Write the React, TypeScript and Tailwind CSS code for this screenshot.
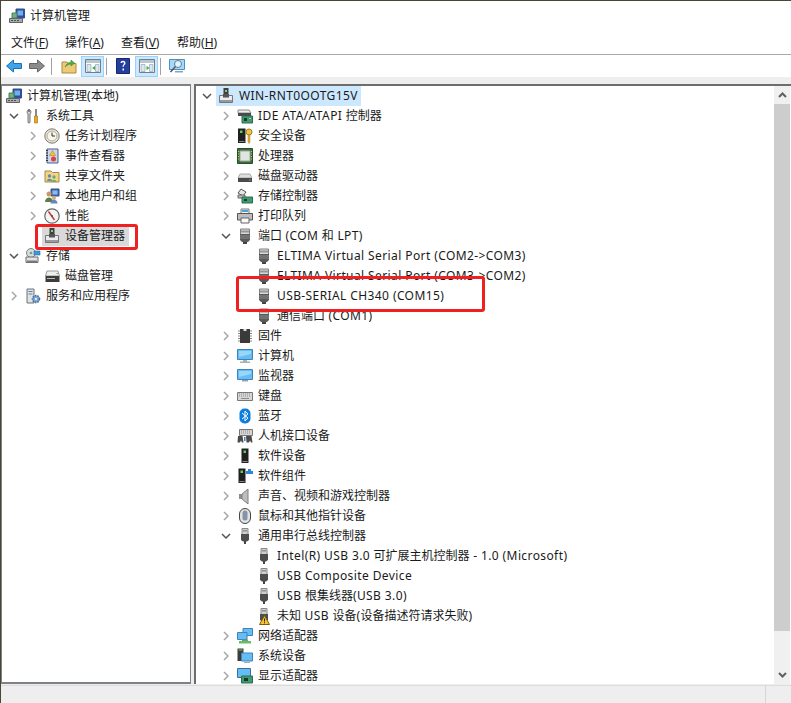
import React from 'react';

type SvgProps = { children: React.ReactNode; w?: number; h?: number };

const Svg: React.FC<SvgProps> = ({ children, w = 16, h = 16 }) => (
    <svg width={w} height={h} viewBox={`0 0 ${w} ${h}`} className="shrink-0 block">{children}</svg>
);

// tree icons, all drawn on a 16px box
const Port = () => (
    <Svg>
        <path d="M3.500 1h9v7h-9z" fill="#d8d8d8" stroke="#808080" />
        <path d="M5 2.500v2M7 2.500v2M9 2.500v2M11 2.500v2" stroke="#555" />
        <path d="M3 6h10v6l-2 2H5l-2-2z" fill="#5a5a5a" />
        <path d="M3 8h10M3 10h10" stroke="#8a8a8a" />
        <path d="M6 14h4v2H6z" fill="#444" />
    </Svg>
);

const Usb = () => (
    <Svg>
        <path d="M5 0.500h6v6H5z" fill="#cfcfcf" stroke="#8a8a8a" />
        <path d="M6.500 2h1v1.500h-1zM8.500 2h1v1.500h-1z" fill="#555" />
        <path d="M4 6h8v6l-2 1.500H6L4 12z" fill="#4d4d4d" />
        <path d="M7 13h2v3H7z" fill="#444" />
    </Svg>
);

const DeviceMgr = () => (
    <Svg>
        <path d="M5.500 0h5v6h-5z" fill="#3f3f3f" />
        <path d="M7 2h2v2H7z" fill="#7ed07a" />
        <path d="M1.500 7.500h13v7h-13z" fill="#ececec" stroke="#777" />
        <path d="M5 6h6v3.500H5z" fill="#555" />
        <path d="M2 12h12v2H2z" fill="#9a9a9a" />
    </Svg>
);

const MgmtComputer = () => (
    <Svg>
        <path d="M7 1h8.500v9H7z" fill="#2a4fa8" stroke="#3c4f7a" />
        <path d="M8.500 2.500h5.500v5H8.500z" fill="#6fb0ee" />
        <path d="M3 5h5v5H3z" fill="#6db47a" stroke="#4f7f5a" />
        <path d="M0.500 10.500h13v4h-13z" fill="#a8acb0" stroke="#5e6468" />
        <path d="M2 12h2v1H2zM5 12h2v1H5zM8 12h2v1H8z" fill="#4c5256" />
    </Svg>
);

const Tools = () => (
    <Svg>
        <path d="M4 1.500c-2 .5-2.500 3-1 4.500v8c0 1.500 2 1.500 2 0V6c1.500-1.500 1-4-1-4.500V4H4z" fill="#d8d8d8" stroke="#555" strokeWidth=".8" />
        <path d="M10 1h2v7h-2z" fill="#8a8a8a" />
        <path d="M9.500 8h3v7h-3z" fill="#e6a91e" stroke="#a06f10" strokeWidth=".6" />
    </Svg>
);

const Clock = () => (
    <Svg>
        <circle cx="8" cy="8" r="7.200" fill="#ece7d6" stroke="#7a7a72" />
        <circle cx="8" cy="8" r="5" fill="#f8f6ec" stroke="#b5ae94" />
        <path d="M8 4.500V8h3" stroke="#333" fill="none" />
    </Svg>
);

const EventLog = () => (
    <Svg>
        <path d="M3 1h11v14H3z" fill="#c9d6ec" stroke="#4a5f8c" />
        <path d="M2 2.500h2M2 5h2M2 7.500h2M2 10h2M2 12.500h2" stroke="#333" />
        <path d="M8.500 2.500l3 5h-6z" fill="#f2c23a" stroke="#a67b10" strokeWidth=".5" />
        <circle cx="9.500" cy="11" r="2.500" fill="#d8443c" />
    </Svg>
);

const SharedFolder = () => (
    <Svg>
        <path d="M1 3h6l1.500 1.500H15V14H1z" fill="#efd48a" stroke="#a78a3e" />
        <circle cx="5.500" cy="8" r="1.700" fill="#6a87b0" />
        <path d="M3 13c0-3 5-3 5 0z" fill="#6a87b0" />
        <circle cx="10" cy="9" r="1.700" fill="#6cae66" />
        <path d="M7.500 14c0-3 5-3 5 0z" fill="#6cae66" />
    </Svg>
);

const Users = () => (
    <Svg>
        <path d="M7 1h8v7H7z" fill="#3f68b5" stroke="#3c4f7a" />
        <path d="M8.500 2.500h5v4h-5z" fill="#86bdf0" />
        <circle cx="5" cy="6" r="2.500" fill="#c99a66" />
        <path d="M1 14c0-6 8-6 8 0z" fill="#5c7f4a" />
        <circle cx="10" cy="10" r="2" fill="#d2ac7c" />
        <path d="M6.500 15.500c0-5 7-5 7 0z" fill="#6a86b8" />
    </Svg>
);

const Gauge = () => (
    <Svg>
        <circle cx="8" cy="8" r="7.200" fill="#f4f4f4" stroke="#666" strokeWidth="1.200" />
        <path d="M4.500 3.500l6 8.500" stroke="#c8322c" strokeWidth="1.400" />
        <circle cx="8" cy="8" r="1" fill="#555" />
    </Svg>
);

const Storage = () => (
    <Svg>
        <circle cx="6" cy="5" r="4.500" fill="#d8dce0" stroke="#7d8388" />
        <circle cx="6" cy="5" r="1.300" fill="#68a860" />
        <path d="M9 3h6v4H9z" fill="#3c9ad8" stroke="#2a6e9e" strokeWidth=".6" />
        <path d="M1 9h12v5.500H1z" fill="#e3e3e3" stroke="#6d6d6d" />
        <path d="M2 12.500h10v2H2z" fill="#7a7a7a" />
    </Svg>
);

const DiskMgmt = () => (
    <Svg>
        <path d="M3 3h11l1.500 5h-14z" fill="#eeeeee" stroke="#9a9a9a" />
        <path d="M1.500 8h14v6h-14z" fill="#3c3c3c" />
        <path d="M3 10h8v1H3z" fill="#bbb" />
        <path d="M12.500 5h2v1h-2z" fill="#55c24f" />
    </Svg>
);

const Services = () => (
    <Svg>
        <path d="M2 1h7v14H2z" fill="#dfe3e6" stroke="#6d7378" />
        <path d="M3.500 3h4v1h-4zM3.500 5.500h4v1h-4z" fill="#5f7f9f" />
        <circle cx="11" cy="11" r="3.500" fill="#7aa6d8" stroke="#4a6c96" strokeWidth="1.600" strokeDasharray="1.500 1" />
        <circle cx="11" cy="11" r="1" fill="#fff" />
    </Svg>
);

const Ide = () => (
    <Svg>
        <path d="M1 2h11l2 3H1z" fill="#ededed" stroke="#8a8a8a" />
        <path d="M1 5h13v3H1z" fill="#4a4a4a" />
        <path d="M5 8h10.500v7H5z" fill="#3f9a72" stroke="#2c6e50" />
        <path d="M7 10h3v3H7z" fill="#17382a" />
        <path d="M12 10h2v1h-2z" fill="#d8c65a" />
    </Svg>
);

const Security = () => (
    <Svg>
        <path d="M1 0.500h7.500V15H1z" fill="#202020" />
        <path d="M3 2.500h2.500v2.500H3z" fill="#5cd05a" />
        <path d="M2 13h5.500v1H2z" fill="#888" />
        <circle cx="12" cy="4" r="3" fill="#eec350" stroke="#a87f18" />
        <path d="M11 7h2v7l-1 1.500-1-1.500z" fill="#e0b23c" stroke="#a87f18" strokeWidth=".5" />
    </Svg>
);

const Cpu = () => (
    <Svg>
        <path d="M0.500 0.500h15v15H.5z" fill="#3b6e3e" stroke="#274f2a" />
        <path d="M3 3h10v10H3z" fill="#dfe5df" stroke="#9fa99f" />
        <path d="M1 3.500h1M1 6h1M1 8.500h1M1 11h1M14 3.500h1M14 6h1M14 8.500h1M14 11h1" stroke="#d8c65a" />
    </Svg>
);

const DiskDrive = () => (
    <Svg>
        <path d="M3 6h10l2 4H1z" fill="#dedede" stroke="#a8a8a8" />
        <path d="M1 10h14v4H1z" fill="#4a4a4a" />
        <path d="M12 11.500h1.500v1H12z" fill="#58c850" />
    </Svg>
);

const StorageCtl = () => (
    <Svg>
        <path d="M4 1l5 3-3 4-5-3z" fill="#e5e5e5" stroke="#555" />
        <path d="M1 7h7v3H1z" fill="#bbb" stroke="#666" />
        <path d="M5 9h10.500v6H5z" fill="#3f9a72" stroke="#2c6e50" />
        <path d="M7 11h3v2H7z" fill="#17382a" />
    </Svg>
);

const Printer = () => (
    <Svg>
        <path d="M4 1h8v5H4z" fill="#f4f4f4" stroke="#777" />
        <path d="M5 2h6v2H5z" fill="#4aa3df" />
        <path d="M0.500 5.500h15V12H.5z" fill="#bdbdbd" stroke="#555" />
        <path d="M4 10h8v5H4z" fill="#fafafa" stroke="#666" />
    </Svg>
);

const Firmware = () => (
    <Svg>
        <path d="M3 1h10v14H3z" fill="#3a3a3a" />
        <path d="M6.500 1h3v2h-3z" fill="#ddd" />
        <path d="M1 3h2M1 5.500h2M1 8h2M1 10.500h2M1 13h2M13 3h2M13 5.500h2M13 8h2M13 10.500h2M13 13h2" stroke="#888" />
    </Svg>
);

const Monitor = ({ stand = false }: { stand?: boolean }) => (
    <Svg>
        <path d="M0.500 1.500h15v10H.5z" fill="#64bdf5" stroke="#3f83b8" />
        <path d="M2 3h12v3L2 9z" fill="#9ad6fa" />
        {stand ? <path d="M6 12h4v1.500h3V15H3v-1.500h3z" fill="#a8b0b8" /> : <path d="M5 12h6v1.500H5z" fill="#9aa2aa" />}
    </Svg>
);

const Keyboard = () => (
    <Svg>
        <path d="M0.500 4.500h15v8H.5z" fill="#d6d6d6" stroke="#777" />
        <path d="M2 6h12M2 8h12" stroke="#8c8c8c" strokeDasharray="1 1" />
        <path d="M4 10.500h8" stroke="#8c8c8c" />
    </Svg>
);

const Bluetooth = () => (
    <Svg>
        <rect x="2.500" y="0.500" width="11" height="15" rx="5" fill="#0a7fe0" />
        <path d="M5 5l6 5-3 3V3l3 3-6 5" stroke="#fff" fill="none" />
    </Svg>
);

const Hid = () => (
    <Svg>
        <path d="M2.500 1.500h13v6h-13z" fill="#d6d6d6" stroke="#777" />
        <path d="M4 3h10M4 5h10" stroke="#8c8c8c" strokeDasharray="1 1" />
        <path d="M1 8h4.500l1 6.500H5L4 12.500 3 14.500H.5z" fill="#4a4a4a" />
        <path d="M9 8h5.500l1 6.500H14l-1-2-1 2h-2.500z" fill="#4a4a4a" />
        <path d="M7 9h1.500v4H7z" fill="#3f7fc8" />
    </Svg>
);

const SoftDevice = () => (
    <Svg>
        <path d="M4.500 0.500h7V15h-7z" fill="#202020" />
        <path d="M6.500 2.500h2.500v2.500H6.500z" fill="#5cd05a" />
        <path d="M5.500 13h5v1h-5z" fill="#888" />
    </Svg>
);

const SoftComponent = () => (
    <Svg>
        <path d="M1.500 0.500h7V15h-7z" fill="#202020" />
        <path d="M3.500 2.500h2.500v2.500H3.500z" fill="#5cd05a" />
        <path d="M2.500 13h5v1h-5z" fill="#888" />
        <path d="M9 3h2V1h3v2h2v3H9z" fill="#2f86d8" />
    </Svg>
);

const Sound = () => (
    <Svg>
        <path d="M2 6h3v5H2z" fill="#8d8d8d" />
        <path d="M5 6l6-5v15l-6-5z" fill="#bdbdbd" stroke="#808080" />
    </Svg>
);

const Mouse = () => (
    <Svg>
        <rect x="2.500" y="0.500" width="11" height="15" rx="5.500" fill="#e3e3e3" stroke="#444" />
        <rect x="5.500" y="2.500" width="5" height="10" rx="2.500" fill="#8593a6" />
    </Svg>
);

const UsbWarning = () => (
    <div className="relative w-4 h-4 shrink-0">
        <Usb />
        <svg width="11" height="10" viewBox="0 0 11 10" className="absolute left-[3px] top-[7px]">
            <path d="M5.500 0.500L10.500 9.500H.5z" fill="#f5c32e" stroke="#7a5c10" />
            <path d="M5.500 3.500v3M5.500 7.300v1" stroke="#222" />
        </svg>
    </div>
);

const Network = () => (
    <Svg>
        <path d="M6 0.500h9.500v7H6z" fill="#64bdf5" stroke="#3f83b8" />
        <path d="M0.500 4.500h9.500v7H.5z" fill="#64bdf5" stroke="#3f83b8" />
        <path d="M2 13h12v2.500H2z" fill="#64c060" />
        <path d="M5 11.500h6V13H5z" fill="#8a8a8a" />
    </Svg>
);

const SystemDev = () => (
    <Svg>
        <path d="M0.500 0.500h6V13h-6z" fill="#3c3c3c" />
        <path d="M1.500 1.500h4v1h-4z" fill="#6fc86a" />
        <path d="M4.500 5h11v8h-11z" fill="#64bdf5" stroke="#3f83b8" />
        <path d="M7 13.500h6V15H7z" fill="#a8b0b8" />
    </Svg>
);

const DisplayAdapter = () => (
    <Svg>
        <path d="M0.500 0.500h13v9H.5z" fill="#64bdf5" stroke="#3f6f98" />
        <path d="M4.500 8h11v7h-11z" fill="#3f9a72" stroke="#2c6e50" />
        <path d="M7 10h4v3H7z" fill="#17382a" />
    </Svg>
);

// toolbar icons
const ArrowLeft = () => (
    <Svg>
        <path d="M.5 8l7-6v3.500h8v5h-8V14z" fill="#3ea4ea" stroke="#1e6fb0" />
    </Svg>
);

const ArrowRight = () => (
    <Svg>
        <path d="M15.500 8l-7-6v3.500h-8v5h8V14z" fill="#8c8c8c" stroke="#666" />
    </Svg>
);

const UpFolder = () => (
    <Svg>
        <path d="M1 4h5l1 1.500h8V15H1z" fill="#edca78" stroke="#a78a3e" />
        <path d="M4 9c2-4 4-4.500 6-5V2l3.500 3L10 8V6c-2 0-4 1-6 3z" fill="#4caf3d" stroke="#2f7f26" strokeWidth=".5" />
    </Svg>
);

const Pane = ({ flip = false }: { flip?: boolean }) => (
    <Svg>
        <path d="M.5 1.500h15v13H.5z" fill="#fff" stroke="#6f7f86" />
        <path d="M1 2h14v3H1z" fill="#b8c6d0" />
        <path d="M2 6.500h4v7H2zM10.500 6.500h3.500v7h-3.500z" fill="#dbe6ee" stroke="#6f8fa6" strokeWidth=".5" />
        <path d={flip ? 'M7.500 8l3 2-3 2z' : 'M10 8l-3 2 3 2z'} fill="#3cae3c" />
    </Svg>
);

const HelpBook = () => (
    <Svg>
        <path d="M1.500 0.500h13v15h-13z" fill="#25409c" stroke="#16296e" />
        <path d="M5.500 5c0-3 5-3 5 0 0 2-2 2-2 4H7.500c0-2.500 1.500-2.500 1.500-4 0-1-2-1-2 0zM7.500 10.500H9V12.500H7.500z" fill="#fff" />
    </Svg>
);

const MonitorSearch = () => (
    <Svg>
        <path d="M.5 1.500h15v10H.5z" fill="#a8d8f5" stroke="#4a90c0" />
        <circle cx="9" cy="6" r="3.500" fill="#e5f4fc" stroke="#5a7f98" />
        <path d="M6.500 8.500L1.500 14" stroke="#556" strokeWidth="1.500" />
        <path d="M6 13h8v1.500H6z" fill="#8aa4b6" />
    </Svg>
);

const Chevron = ({ open }: { open?: boolean }) =>
    open ? (
        <svg width="10" height="6" viewBox="0 0 10 6"><path d="M1 1l4 4 4-4" fill="none" stroke="#555" strokeWidth="1.500" /></svg>
    ) : (
        <svg width="6" height="10" viewBox="0 0 6 10"><path d="M1 1l4 4-4 4" fill="none" stroke="#a6a6a6" strokeWidth="1.500" /></svg>
    );

// Latin runs in the reference are a bit wider than Noto Sans, CJK runs are not
const Label = ({ text }: { text: string }) => (
    <span className="ml-[5px] text-[12px] text-[#1a1a1a]">
        {text.split(/([\u4e00-\u9fff、]+)/).map((part, i) =>
            i % 2 === 1 ? <span key={i}>{part}</span> : <span key={i} className="tracking-[0.4px]">{part}</span>
        )}
    </span>
);

type Expand = 'open' | 'closed' | 'none';

interface RowProps {
    indent: string;
    expand?: Expand;
    noSlot?: boolean;
    mark?: string;
    icon: React.ReactNode;
    label: string;
}

const TreeRow: React.FC<RowProps> = ({ indent, expand = 'none', noSlot, mark = '', icon, label }) => (
    <div className={`flex items-center h-5 whitespace-nowrap ${indent}`}>
        {!noSlot && (
            <div className="w-[19px] shrink-0 flex">
                <div className="w-[15px] flex items-center justify-center">
                    {expand !== 'none' && <Chevron open={expand === 'open'} />}
                </div>
            </div>
        )}
        <div className={`flex items-center h-5 ${mark}`}>
            {icon}
            <Label text={label} />
        </div>
    </div>
);

const L1 = 'pl-[22px]';
const L2 = 'pl-[41px]';

const rightRows: RowProps[] = [
    { indent: L1, expand: 'closed', icon: <Ide />, label: 'IDE ATA/ATAPI 控制器' },
    { indent: L1, expand: 'closed', icon: <Security />, label: '安全设备' },
    { indent: L1, expand: 'closed', icon: <Cpu />, label: '处理器' },
    { indent: L1, expand: 'closed', icon: <DiskDrive />, label: '磁盘驱动器' },
    { indent: L1, expand: 'closed', icon: <StorageCtl />, label: '存储控制器' },
    { indent: L1, expand: 'closed', icon: <Printer />, label: '打印队列' },
    { indent: L1, expand: 'open', icon: <Port />, label: '端口 (COM 和 LPT)' },
    { indent: L2, icon: <Port />, label: 'ELTIMA Virtual Serial Port (COM2->COM3)' },
    { indent: L2, icon: <Port />, label: 'ELTIMA Virtual Serial Port (COM3->COM2)' },
    { indent: L2, icon: <Port />, label: 'USB-SERIAL CH340 (COM15)' },
    { indent: L2, icon: <Port />, label: '通信端口 (COM1)' },
    { indent: L1, expand: 'closed', icon: <Firmware />, label: '固件' },
    { indent: L1, expand: 'closed', icon: <Monitor stand />, label: '计算机' },
    { indent: L1, expand: 'closed', icon: <Monitor />, label: '监视器' },
    { indent: L1, expand: 'closed', icon: <Keyboard />, label: '键盘' },
    { indent: L1, expand: 'closed', icon: <Bluetooth />, label: '蓝牙' },
    { indent: L1, expand: 'closed', icon: <Hid />, label: '人机接口设备' },
    { indent: L1, expand: 'closed', icon: <SoftDevice />, label: '软件设备' },
    { indent: L1, expand: 'closed', icon: <SoftComponent />, label: '软件组件' },
    { indent: L1, expand: 'closed', icon: <Sound />, label: '声音、视频和游戏控制器' },
    { indent: L1, expand: 'closed', icon: <Mouse />, label: '鼠标和其他指针设备' },
    { indent: L1, expand: 'open', icon: <Usb />, label: '通用串行总线控制器' },
    { indent: L2, icon: <Usb />, label: 'Intel(R) USB 3.0 可扩展主机控制器 - 1.0 (Microsoft)' },
    { indent: L2, icon: <Usb />, label: 'USB Composite Device' },
    { indent: L2, icon: <Usb />, label: 'USB 根集线器(USB 3.0)' },
    { indent: L2, icon: <UsbWarning />, label: '未知 USB 设备(设备描述符请求失败)' },
    { indent: L1, expand: 'closed', icon: <Network />, label: '网络适配器' },
    { indent: L1, expand: 'closed', icon: <SystemDev />, label: '系统设备' },
    { indent: L1, expand: 'closed', icon: <DisplayAdapter />, label: '显示适配器' },
];

const MenuItem = ({ label, hot, className }: { label: string; hot: string; className: string }) => (
    <span className={className}>
        {label}(<span className="underline">{hot}</span>)
    </span>
);

const ToolButton = ({ children }: { children: React.ReactNode }) => (
    <div className="w-[23px] h-[21px] flex items-center justify-center bg-[#cce8ff] border border-[#99d1ff]">{children}</div>
);

const ToolSep = ({ className }: { className: string }) => <div className={`w-px h-[17px] bg-[#a0a0a0] ${className}`} />;

export default function App() {
    return (
        <div className="relative w-[791px] h-[703px] overflow-hidden flex flex-col bg-white border-t border-l border-[#4a4636] font-['Noto_Sans','Noto_Sans_CJK_SC',sans-serif] text-[12px] text-[#1a1a1a]">
            {/* title bar */}
            <div className="h-[31px] flex items-center pl-[8px] pb-[2px] shrink-0">
                <MgmtComputer />
                <span className="ml-[5px]">计算机管理</span>
            </div>

            {/* menu bar */}
            <div className="h-[23px] flex items-center shrink-0 border-b border-[#a9a9a9]">
                <MenuItem label="文件" hot="F" className="ml-[10px] w-[54px]" />
                <MenuItem label="操作" hot="A" className="w-[56px]" />
                <MenuItem label="查看" hot="V" className="w-[56px]" />
                <MenuItem label="帮助" hot="H" className="" />
            </div>

            {/* toolbar */}
            <div className="h-[22px] flex items-center shrink-0">
                <div className="ml-[5px]"><ArrowLeft /></div>
                <div className="ml-[7px]"><ArrowRight /></div>
                <ToolSep className="ml-[6px]" />
                <div className="ml-[9px]"><UpFolder /></div>
                <div className="ml-[4px]"><ToolButton><Pane /></ToolButton></div>
                <ToolSep className="ml-[2px]" />
                <div className="ml-[8px]"><HelpBook /></div>
                <div className="ml-[4px]"><ToolButton><Pane flip /></ToolButton></div>
                <ToolSep className="ml-[2px]" />
                <div className="ml-[8px]"><MonitorSearch /></div>
            </div>

            {/* panes */}
            <div className="flex-1 min-h-0 flex flex-col bg-[#eeeeee] pt-[7px]">
                <div className="flex-1 min-h-0 flex">
                    <div className="w-[190px] shrink-0 bg-white border-t-2 border-x border-b-2 border-[#7d8287] overflow-hidden">
                        <TreeRow indent="pl-[4px]" noSlot icon={<MgmtComputer />} label="计算机管理(本地)" />
                        <TreeRow indent="pl-[4px]" expand="open" icon={<Tools />} label="系统工具" />
                        <TreeRow indent="pl-[23px]" expand="closed" icon={<Clock />} label="任务计划程序" />
                        <TreeRow indent="pl-[23px]" expand="closed" icon={<EventLog />} label="事件查看器" />
                        <TreeRow indent="pl-[23px]" expand="closed" icon={<SharedFolder />} label="共享文件夹" />
                        <TreeRow indent="pl-[23px]" expand="closed" icon={<Users />} label="本地用户和组" />
                        <TreeRow indent="pl-[23px]" expand="closed" icon={<Gauge />} label="性能" />
                        <TreeRow indent="pl-[23px]" icon={<DeviceMgr />} label="设备管理器" mark="bg-[#d9d9d9] -ml-[2px] pl-[2px] pr-[4px]" />
                        <TreeRow indent="pl-[4px]" expand="open" icon={<Storage />} label="存储" />
                        <TreeRow indent="pl-[23px]" icon={<DiskMgmt />} label="磁盘管理" />
                        <TreeRow indent="pl-[4px]" expand="closed" icon={<Services />} label="服务和应用程序" />
                    </div>

                    <div className="flex-1 min-w-0 ml-[3px] flex bg-white border-t-2 border-l-2 border-[#6d6d6d] border-b-0">
                        <div className="flex-1 min-w-0 overflow-hidden">
                            <TreeRow indent="pl-[3px]" expand="open" icon={<DeviceMgr />} label="WIN-RNT0OOTG15V" mark="bg-[#cce8ff] -ml-[2px] pl-[2px] pr-[3px]" />
                            {rightRows.map(row => (
                                <TreeRow key={row.label} {...row} />
                            ))}
                        </div>
                        {/* scrollbar */}
                        <div className="w-[16px] shrink-0 mr-px flex flex-col bg-[#f0f0f0]">
                            <div className="h-[18px] flex items-center justify-center">
                                <svg width="9" height="6" viewBox="0 0 9 6"><path d="M1 5l3.500-3.500L8 5" fill="none" stroke="#606060" strokeWidth="2" /></svg>
                            </div>
                            <div className="h-[527px] bg-[#cdcdcd]" />
                            <div className="flex-1 flex items-end justify-center pb-[6px]">
                                <svg width="9" height="6" viewBox="0 0 9 6"><path d="M1 1l3.500 3.500L8 1" fill="none" stroke="#606060" strokeWidth="2" /></svg>
                            </div>
                        </div>
                    </div>
                </div>

                {/* status bar */}
                <div className="h-[18px] shrink-0 flex justify-end border-t border-[#dcdcdc] mt-[1px]">
                    <div className="w-[26px] border-l border-[#d6d6d6]" />
                </div>
            </div>

            {/* red annotation boxes drawn over the screenshot */}
            <div className="absolute left-[34px] top-[223px] w-[103px] h-[26px] border-[3px] border-[#f02020] rounded-[3px]" />
            <div className="absolute left-[235px] top-[275px] w-[249px] h-[36px] border-[3px] border-[#f02020] rounded-[3px]" />
        </div>
    );
}
